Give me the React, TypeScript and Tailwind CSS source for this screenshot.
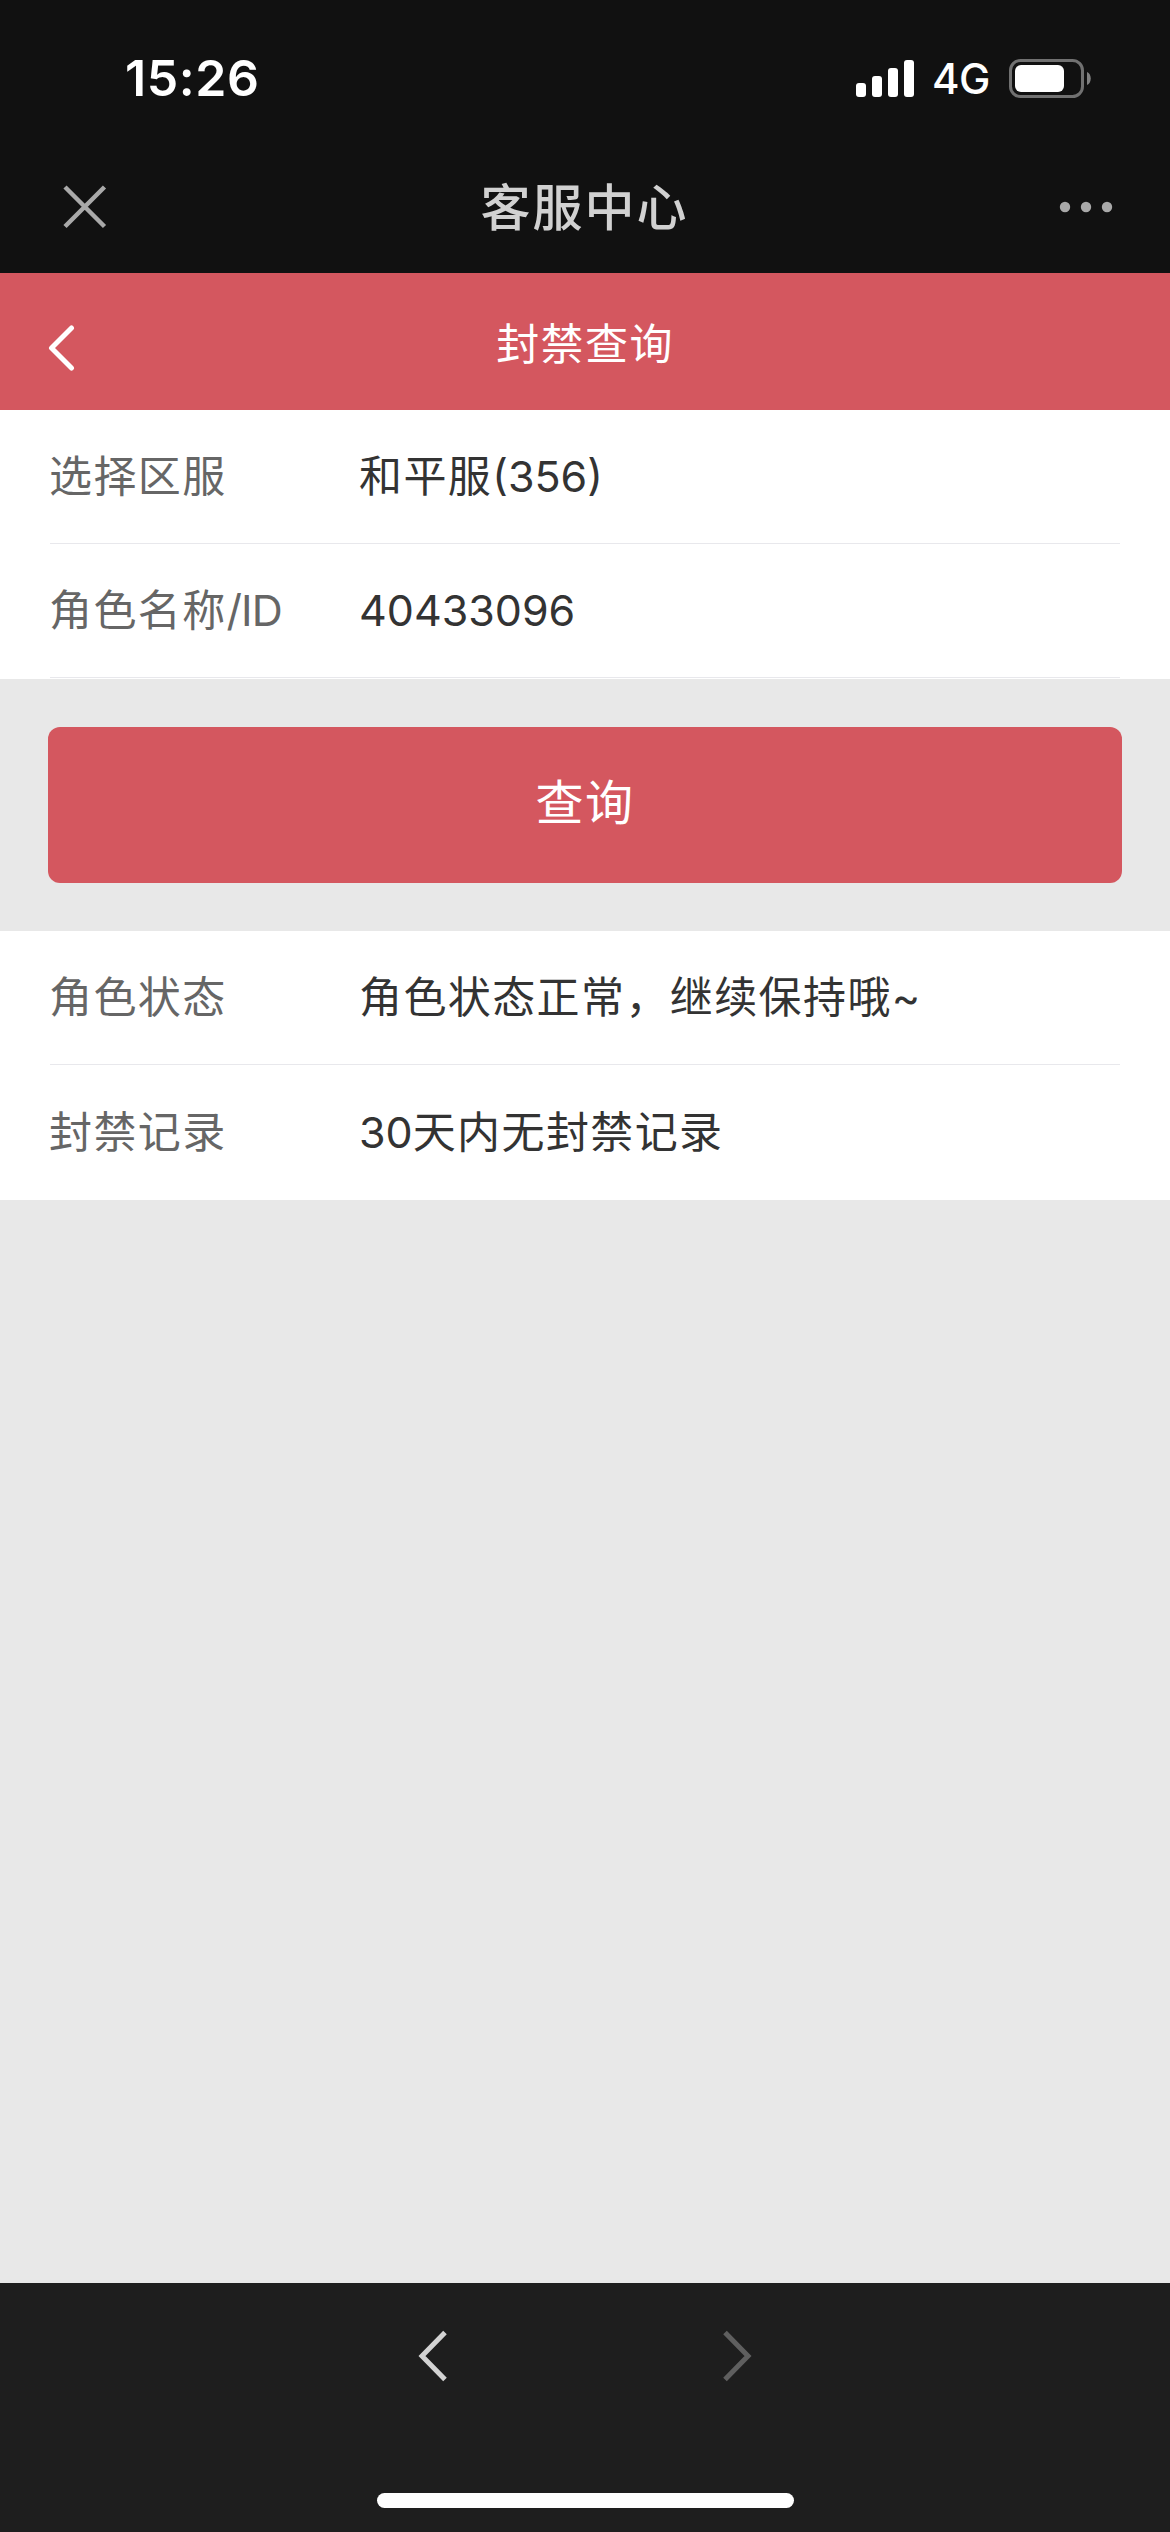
import type { ReactNode } from "react";

type RowProps = {
  label: ReactNode;
  children: ReactNode;
};

const Row = ({ label, children }: RowProps) => {
  return (
    <div className="flex h-[134px] items-center border-b-1 border-[#e8e8ec]">
      <div className="-ml-px w-[310px] text-[#666666]">{label}</div>
      <div className="text-[#333333]">{children}</div>
    </div>
  );
};

// Latin letters and digits sit tighter than the Chinese text around them
const Latin = ({ children }: { children: ReactNode }) => (
  <span className="tracking-[0px]">{children}</span>
);

const StatusBar = () => {
  return (
    <div className="flex h-[156px] items-center justify-between pl-[125px] pr-[79px] text-white">
      <div className="text-[50px] font-semibold leading-none tracking-[0.6px]">15:26</div>
      <div className="flex items-center">
        <svg width="58" height="37" viewBox="0 0 58 37" fill="white">
          <rect x="0" y="23" width="10" height="14" rx="3" />
          <rect x="16" y="16" width="10" height="21" rx="3" />
          <rect x="32" y="8" width="10" height="29" rx="3" />
          <rect x="48" y="0" width="10" height="37" rx="3" />
        </svg>
        <div className="ml-[18px] w-[77px] pt-0.5 text-[42px] font-medium leading-none tracking-[-0.5px]">4G</div>
        <svg width="82" height="39" viewBox="0 0 82 39" fill="none">
          <rect x="1.5" y="1.5" width="72" height="36" rx="10" stroke="#717171" strokeWidth="3" />
          <rect x="6" y="6" width="49" height="27" rx="6" fill="white" />
          <path d="M78 13c5 2 5 11 0 13z" fill="#808080" />
        </svg>
      </div>
    </div>
  );
};

const NavBar = () => {
  return (
    <div className="flex h-[117px] items-center justify-between pb-[16px] pl-[62px] pr-[57px]">
      <svg width="45" height="45" viewBox="0 0 45 45" stroke="#a9a9a9" strokeWidth="4.5">
        <path d="M3 3L42.5 42.5M42.5 3L3 42.5" />
      </svg>
      <h1 className="pl-[3px] pt-0.5 text-[50px] font-medium leading-none tracking-[2px] text-[#d1d1d1]">客服中心</h1>
      <svg width="54" height="12" viewBox="0 0 54 12" fill="#a9a9a9">
        <circle cx="6" cy="6" r="5.2" />
        <circle cx="27" cy="6" r="5.2" />
        <circle cx="48" cy="6" r="5.2" />
      </svg>
    </div>
  );
};

export default function App() {
  return (
    <div className="flex h-[2532px] w-[1170px] flex-col bg-[#e8e8e8] font-['Inter','Noto_Sans_CJK_SC',sans-serif] text-[43px] tracking-[1.4px]">
      <header className="bg-[#111111]">
        <StatusBar />
        <NavBar />
      </header>

      <div className="grid h-[137px] grid-cols-[1fr_auto_1fr] items-center bg-[#d4575f] pl-[46px] text-white">
        <svg width="30" height="46" viewBox="0 0 30 46" className="mt-3" fill="none" stroke="white" strokeWidth="5" strokeLinecap="round" strokeLinejoin="round">
          <path d="M25.5 3L5.5 23L25.5 43" />
        </svg>
        <h2 className="mr-[46px] pt-[6px] leading-none">封禁查询</h2>
      </div>

      <section className="bg-white px-[50px] pb-px">
        <Row label="选择区服">
          和平服<Latin>(356)</Latin>
        </Row>
        <Row
          label={
            <>
              角色名称<span className="tracking-[-1px]">/ID</span>
            </>
          }
        >
          <Latin>40433096</Latin>
        </Row>
      </section>

      <div className="p-[48px]">
        <button className="h-[156px] w-full rounded-[12px] bg-[#d4575f] pb-[5px] text-[48px] text-white">查询</button>
      </div>

      <section className="bg-white px-[50px]">
        <Row label="角色状态">
          角色状态正常，继续保持哦<Latin>~</Latin>
        </Row>
        <div className="flex h-[135px] items-center">
          <div className="-ml-px w-[310px] text-[#666666]">封禁记录</div>
          <div className="text-[#333333]">
            <Latin>30</Latin>天内无封禁记录
          </div>
        </div>
      </section>

      <footer className="mt-auto flex h-[249px] flex-col items-center justify-between bg-[#1e1e1e] pb-[24px] pt-[47px]">
        <div className="flex w-[334px] justify-between">
          <svg width="32" height="52" viewBox="0 0 32 52" fill="none" stroke="#d3d3d3" strokeWidth="5">
            <path d="M27 2.5L4 26L27 49.5" />
          </svg>
          <svg width="32" height="52" viewBox="0 0 32 52" fill="none" stroke="#5f5f5f" strokeWidth="5">
            <path d="M5 2.5L28 26L5 49.5" />
          </svg>
        </div>
        <div className="h-[15px] w-[417px] rounded-full bg-white" />
      </footer>
    </div>
  );
}
